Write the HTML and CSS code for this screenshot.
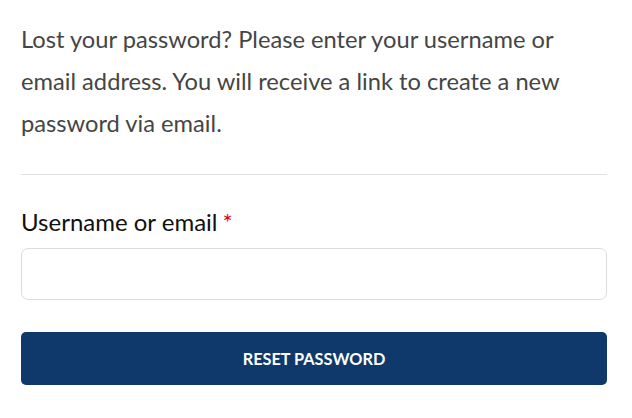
FILE: index.html
```html
<!DOCTYPE html>
<html>
<head>
<meta charset="utf-8">
<link rel="stylesheet" href="styles.css">
</head>
<body>
<form class="lost-form">
  <p class="intro">Lost your password? Please enter your username or email address. You will receive a link to create a new password via email.</p>
  <hr class="divider">
  <label class="field-label" for="user">Username or email<span class="req">*</span></label>
  <input class="field-input" id="user" type="text">
  <button class="reset-btn" type="button">RESET PASSWORD</button>
</form>
</body>
</html>
```
FILE: styles.css
```css
html, body {
  margin: 0;
  padding: 0;
  background: #fff;
}
.lost-form {
  padding: 18px 25px 0 21px;
  display: flex;
  flex-direction: column;
}
.intro {
  margin: 0;
  font-family: Lato, "Liberation Sans", sans-serif;
  font-size: 23.7px;
  line-height: 42px;
  color: #454545;
}
.divider {
  border: 0;
  border-top: 1px solid #e2e2e2;
  margin: 30px 0 0;
  height: 0;
}
.field-label {
  margin-top: 32px;
  font-family: Lato, "Liberation Sans", sans-serif;
  font-size: 24px;
  line-height: 30px;
  color: #111;
}
.req {
  color: #e2001a;
  margin-left: 5px;
}
.field-input {
  margin-top: 11px;
  height: 52px;
  box-sizing: border-box;
  border: 1px solid #dcdcdc;
  border-radius: 7px;
  background: #fff;
  padding: 0 14px;
  font-size: 18px;
}
.reset-btn {
  margin-top: 32px;
  height: 53px;
  border: 0;
  border-radius: 5px;
  background: #0f396b;
  color: #fff;
  font-family: Lato, "Noto Sans", sans-serif;
  font-weight: 700;
  font-size: 16.3px;
  letter-spacing: 0;
}
```
